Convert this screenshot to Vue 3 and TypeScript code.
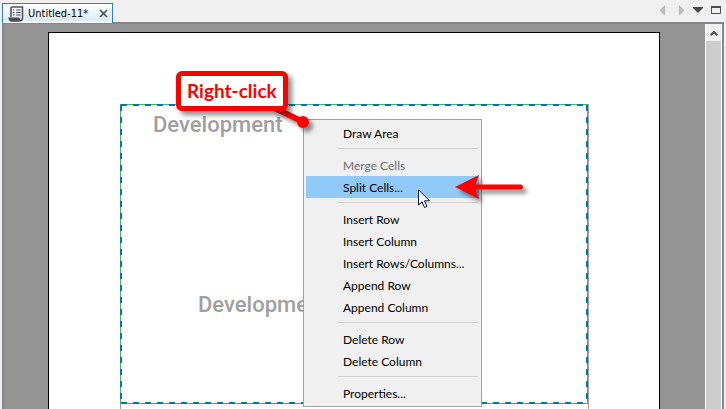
<script setup lang="ts">
interface Entry {
  label: string
  disabled?: boolean
  active?: boolean
}

const groups: Entry[][] = [
  [{ label: 'Draw Area' }],
  [{ label: 'Merge Cells', disabled: true }, { label: 'Split Cells...', active: true }],
  [
    { label: 'Insert Row' },
    { label: 'Insert Column' },
    { label: 'Insert Rows/Columns...' },
    { label: 'Append Row' },
    { label: 'Append Column' },
  ],
  [{ label: 'Delete Row' }, { label: 'Delete Column' }],
  [{ label: 'Properties...' }],
]
</script>

<template>
  <div class="app">
    <header class="tabs">
      <div class="tab">
        <svg width="16" height="16" viewBox="0 0 16 16">
          <path d="M3 11V1.700Q3 1 3.700 1H14.500V12.500Q14.500 14.500 12.500 14.800" fill="none" stroke="#55555b" stroke-width="1.600" />
          <path d="M0.300 11.500H11.500Q11.500 14 13.200 14.800Q12.600 15.700 11.500 15.700H3Q0.600 15 0.300 11.500Z" fill="#4a4a50" />
          <path d="M5 4H6.500M5 6.500H6.500M5 9H6.500M8 4H12.500M8 6.500H12.500M8 9H12.500" stroke="#55555b" stroke-width="1.200" />
        </svg>
        <span class="name">Untitled-11*</span>
        <button class="plain" aria-label="Close tab">
          <svg width="9" height="9" viewBox="0 0 9 9"><path d="M1 1L8 8M8 1L1 8" stroke="#4a4a4a" stroke-width="1.600" /></svg>
        </button>
      </div>
      <nav class="tools">
        <div class="steps">
          <button class="plain" aria-label="Previous tab">
            <svg width="6" height="11" viewBox="0 0 6 11"><path d="M6 0V11L0.500 5.500Z" fill="#bdbdbd" /></svg>
          </button>
          <button class="plain" aria-label="Next tab">
            <svg width="6" height="11" viewBox="0 0 6 11"><path d="M0 0V11L5.500 5.500Z" fill="#bdbdbd" /></svg>
          </button>
        </div>
        <button class="plain" aria-label="List tabs">
          <svg width="10" height="6" viewBox="0 0 10 6"><path d="M0 0H10V1L5 6L0 1Z" fill="#484848" /></svg>
        </button>
        <button class="plain" aria-label="Maximize">
          <svg width="10" height="8" viewBox="0 0 10 8"><path d="M0.500 0V7.500H9.500V0" fill="none" stroke="#4c4c4c" /><path d="M0 1H10" stroke="#4c4c4c" stroke-width="2" /></svg>
        </button>
      </nav>
    </header>

    <main class="pane">
      <div class="desk">
        <section class="page">
          <div class="table">
            <div class="cell">
              <p class="text">Development</p>
              <p class="text second">Development</p>
            </div>
          </div>
        </section>
      </div>
      <aside class="scroll">
        <button class="plain up" aria-label="Scroll up">
          <svg width="8" height="6" viewBox="0 0 8 6"><path d="M0.800 5.200L4 2L7.200 5.200" fill="none" stroke="#505050" stroke-width="2.200" /></svg>
        </button>
        <div class="thumb"></div>
      </aside>
    </main>

    <div class="menu" role="menu">
      <div v-for="(group, i) in groups" :key="i" class="group">
        <button
          v-for="entry in group"
          :key="entry.label"
          class="item"
          :class="{ active: entry.active }"
          :disabled="entry.disabled"
          role="menuitem"
        >{{ entry.label }}</button>
      </div>
    </div>

    <svg class="leader" width="60" height="40" viewBox="0 0 60 40">
      <path d="M10 5L23 5L45 15.500L42 20.500Z" fill="#f00" />
      <circle cx="43" cy="18" r="6" fill="#f00" />
    </svg>
    <div class="callout">Right-click</div>
    <svg class="arrow" width="72" height="28" viewBox="0 0 72 28">
      <path d="M0 13L24 1L20.500 10.500H65.500A2.500 2.500 0 0 1 65.500 15.500H20.500L24 25Z" fill="#f00" />
    </svg>
    <svg class="cursor" width="13" height="20" viewBox="0 0 13 20">
      <path d="M0.500 0.800V16L4 12.700L6.500 18.500L9 17.400L6.500 11.800H11.500Z" fill="#fff" stroke="#10142c" />
    </svg>
  </div>
</template>

<style>
body {
  background: #f0f0f0;
}
</style>

<style scoped>
.app {
  position: relative;
  display: flex;
  flex-direction: column;
  min-height: 100vh;
  overflow: hidden;
  font-family: Lato, "Open Sans", sans-serif;
  font-size: 12px;
  color: #000;
}
.plain {
  display: flex;
  padding: 0;
  border: 0;
  background: none;
}
.tabs {
  z-index: 1;
  display: flex;
  justify-content: space-between;
  margin-bottom: -1px;
  padding: 3px 5px 0 2px;
}
.tab {
  display: flex;
  align-items: center;
  box-sizing: border-box;
  height: 20px;
  padding: 0 4px 0 5px;
  border: 1px solid #2f7fb9;
  border-bottom: 0;
  background: linear-gradient(#fff, #dcebf8 85%, #fff);
}
.name {
  margin: 0 11px 0 4px;
  font-family: "DejaVu Sans Condensed", "DejaVu Sans", sans-serif;
  font-size: 11px;
  line-height: 16px;
}
.tools {
  display: flex;
  align-items: center;
  gap: 8px;
  padding-bottom: 6px;
}
.steps {
  display: flex;
  gap: 14px;
}
.pane {
  display: flex;
  flex: 1;
  margin: 0 2px;
  border: 2px solid #828790;
  border-bottom: 0;
  background: #949494;
}
.desk {
  display: flex;
  flex: 1;
  padding: 8px 45px 0 44px;
}
.page {
  display: flex;
  flex: 1;
  padding: 71px 70px 0 71px;
  border: 1px solid #000;
  border-bottom: 0;
  background: #fff;
}
.table {
  flex: 1;
  border-right: 1px solid #a0a0a0;
  background: linear-gradient(#a0a0a0, #a0a0a0) 0 0 / 1px 100% no-repeat;
}
.cell {
  --across: repeating-linear-gradient(90deg, #0078b0 0 6px, transparent 6px 12px);
  --down: repeating-linear-gradient(#0078b0 0 6px, transparent 6px 12px);
  --line: linear-gradient(#4cae62, #4cae62);
  box-sizing: border-box;
  height: 300px;
  padding: 7px 33px;
  background:
    var(--across) 1px 0 / 100% 2px no-repeat,
    var(--across) 1px 100% / 100% 2px no-repeat,
    var(--down) 0 1px / 2px 100% no-repeat,
    var(--down) 100% 1px / 2px 100% no-repeat,
    var(--line) 0 0 / 100% 1px no-repeat,
    var(--line) 0 100% / 100% 1px no-repeat,
    var(--line) 0 0 / 1px 100% no-repeat,
    var(--line) 100% 0 / 1px 100% no-repeat;
}
.text {
  margin: 0;
  font-family: Roboto, sans-serif;
  font-size: 22px;
  font-weight: 500;
  line-height: 28px;
  color: #a0a0a0;
}
.second {
  padding: 152px 0 0 45px;
}
.scroll {
  display: flex;
  flex-direction: column;
  width: 15px;
  padding: 0 1px;
  background: #fff;
}
.up {
  align-items: center;
  justify-content: center;
  height: 17px;
  background: #f0f0f0;
}
.thumb {
  flex: 1;
  background: #cdcdcd;
}
.menu {
  position: absolute;
  top: 119px;
  left: 303px;
  box-sizing: border-box;
  width: 179px;
  padding: 2px;
  border: 1px solid #a0a0a0;
  background: #f0f0f0;
}
.group + .group::before {
  content: "";
  display: block;
  height: 1px;
  margin: 4px 1px 5px 32px;
  background: #d2d2d2;
}
.item {
  display: block;
  width: 100%;
  height: 22px;
  padding: 2px 0 0 37px;
  border: 0;
  background: none;
  font: inherit;
  line-height: 20px;
  color: #000;
  text-align: left;
  white-space: nowrap;
}
.item:disabled {
  color: #6d6d6d;
}
.item.active {
  background: #91c9f7;
}
.callout {
  position: absolute;
  top: 71px;
  left: 176px;
  padding: 3px 6px;
  border: 5px solid #f00;
  border-radius: 6px;
  background: #fff;
  box-shadow: 4px 4px 5px rgba(0, 0, 0, 0.45);
  font-family: Lato, "Open Sans", sans-serif;
  font-size: 19px;
  font-weight: 700;
  line-height: 24px;
  color: #f00;
}
.leader,
.arrow {
  position: absolute;
  overflow: visible;
  filter: drop-shadow(4px 4px 2px rgba(0, 0, 0, 0.45));
}
.leader {
  top: 104px;
  left: 260px;
}
.arrow {
  top: 174px;
  left: 455px;
}
.cursor {
  position: absolute;
  top: 189px;
  left: 418px;
}
</style>
